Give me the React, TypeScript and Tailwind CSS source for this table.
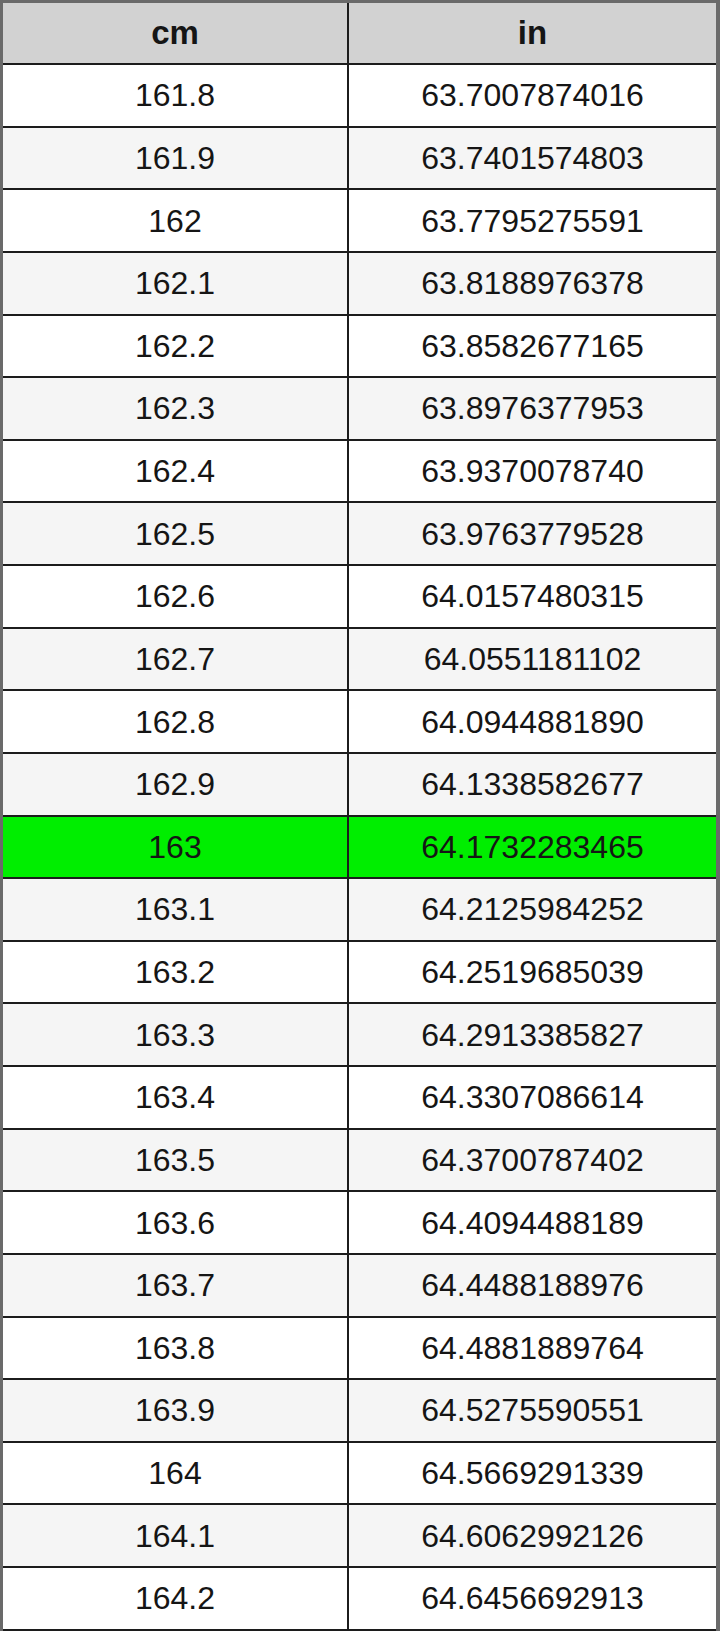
import React from "react";

const rows: [string, string][] = [
  ["161.8", "63.7007874016"],
  ["161.9", "63.7401574803"],
  ["162", "63.7795275591"],
  ["162.1", "63.8188976378"],
  ["162.2", "63.8582677165"],
  ["162.3", "63.8976377953"],
  ["162.4", "63.9370078740"],
  ["162.5", "63.9763779528"],
  ["162.6", "64.0157480315"],
  ["162.7", "64.0551181102"],
  ["162.8", "64.0944881890"],
  ["162.9", "64.1338582677"],
  ["163", "64.1732283465"],
  ["163.1", "64.2125984252"],
  ["163.2", "64.2519685039"],
  ["163.3", "64.2913385827"],
  ["163.4", "64.3307086614"],
  ["163.5", "64.3700787402"],
  ["163.6", "64.4094488189"],
  ["163.7", "64.4488188976"],
  ["163.8", "64.4881889764"],
  ["163.9", "64.5275590551"],
  ["164", "64.5669291339"],
  ["164.1", "64.6062992126"],
  ["164.2", "64.6456692913"],
];

function Row({ cm, inch, bg }: { cm: string; inch: string; bg: string }) {
  return (
    <div className={`grid grid-cols-[346px_1fr] h-[62.64px] border-b-2 border-[#1c1c1c] ${bg}`}>
      <div className="flex items-center justify-center border-r-2 border-[#1c1c1c]">{cm}</div>
      <div className="flex items-center justify-center">{inch}</div>
    </div>
  );
}

export default function App() {
  return (
    <div className="w-[720px] h-[1636px] bg-white font-['Liberation_Sans',Arial,sans-serif] text-[32px] text-[#151515]">
      <div className="border-l-[3px] border-t-[3px] border-r-[4px] border-[#6a6a6a]">
        <div className="grid grid-cols-[346px_1fr] h-[62px] border-b-2 border-[#1c1c1c] bg-[#d2d2d2] font-bold text-[33px]">
          <div className="flex items-center justify-center border-r-2 border-[#1c1c1c]">cm</div>
          <div className="flex items-center justify-center">in</div>
        </div>
        {rows.map(([cm, inch], i) => (
          <Row
            key={cm}
            cm={cm}
            inch={inch}
            bg={cm === "163" ? "bg-[#00ee00]" : i % 2 === 0 ? "bg-white" : "bg-[#f5f5f5]"}
          />
        ))}
      </div>
    </div>
  );
}
